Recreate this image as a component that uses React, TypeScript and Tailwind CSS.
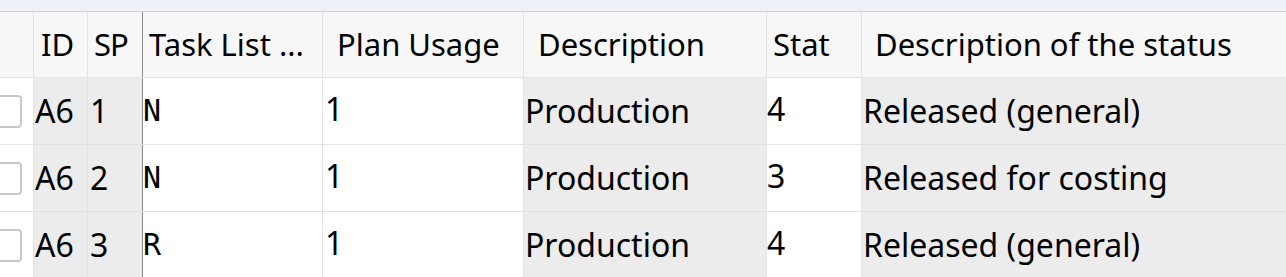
import React from 'react';

type Row = { id: string; sp: string; task: string; usage: string; desc: string; stat: string; statDesc: string };

const ROWS: Row[] = [
  { id: 'A6', sp: '1', task: 'N', usage: '1', desc: 'Production', stat: '4', statDesc: 'Released (general)' },
  { id: 'A6', sp: '2', task: 'N', usage: '1', desc: 'Production', stat: '3', statDesc: 'Released for costing' },
  { id: 'A6', sp: '3', task: 'R', usage: '1', desc: 'Production', stat: '4', statDesc: 'Released (general)' },
];

const font = "font-['Noto_Sans',sans-serif]";

function Checkbox() {
  return (
    <div className="-ml-[12px] h-[33px] w-[34px] rounded-[4px] border-2 border-[#c9c9c9] bg-white" />
  );
}

export default function App() {
  return (
    <div className={`w-[1286px] h-[277px] overflow-hidden bg-white text-black ${font}`}>
      {/* strip above the table */}
      <div className="h-[12px] bg-[#eef2f6] border-b border-[#d3d3d3]" />

      {/* header */}
      <div className="flex h-[66px] bg-[#f7f7f7] border-b border-[#e3e3e3] text-[31px] leading-none">
        <div className="w-[34px] shrink-0 border-r border-[#e3e3e3]" />
        <div className="w-[54px] shrink-0 border-r border-[#e3e3e3] flex items-center pl-[7px]">ID</div>
        <div className="w-[55px] shrink-0 border-r border-[#8a8a8a] flex items-center pl-[6px] tracking-[-1px]">SP</div>
        <div className="w-[180px] shrink-0 border-r border-[#e3e3e3] flex items-center pl-[6px] whitespace-nowrap">Task List ...</div>
        <div className="w-[201px] shrink-0 border-r border-[#e3e3e3] flex items-center pl-[14px] whitespace-nowrap">Plan Usage</div>
        <div className="w-[243px] shrink-0 border-r border-[#e3e3e3] flex items-center pl-[14px]">Description</div>
        <div className="w-[95px] shrink-0 border-r border-[#e3e3e3] flex items-center pl-[6px]">Stat</div>
        <div className="flex-1 flex items-center pl-[13px] whitespace-nowrap">Description of the status</div>
      </div>

      {ROWS.map((r, i) => (
        <div key={i} className="flex h-[67px] border-b border-[#e3e3e3] text-[32px] leading-none">
          <div className="w-[34px] shrink-0 border-r border-[#e3e3e3] flex items-center">
            <Checkbox />
          </div>
          <div className="w-[54px] shrink-0 border-r border-[#e3e3e3] bg-[#ececec] flex items-center pl-[1px]">{r.id}</div>
          <div className="w-[55px] shrink-0 border-r border-[#8a8a8a] bg-[#ececec] flex items-center pl-[2px]">{r.sp}</div>
          <div className="w-[180px] shrink-0 border-r border-[#e3e3e3] flex items-center pl-[0px] text-[30px] font-['DejaVu_Sans_Mono',monospace]">{r.task}</div>
          <div className="w-[201px] shrink-0 border-r border-[#e3e3e3] flex items-center pl-[2px] -mt-[4px]">{r.usage}</div>
          <div className="w-[243px] shrink-0 border-r border-[#e3e3e3] bg-[#ececec] flex items-center pl-[1px]">{r.desc}</div>
          <div className="w-[95px] shrink-0 border-r border-[#e3e3e3] flex items-center pl-[0px] -mt-[4px]">{r.stat}</div>
          <div className="flex-1 bg-[#ececec] flex items-center pl-[1px] whitespace-nowrap">{r.statDesc}</div>
        </div>
      ))}
    </div>
  );
}
